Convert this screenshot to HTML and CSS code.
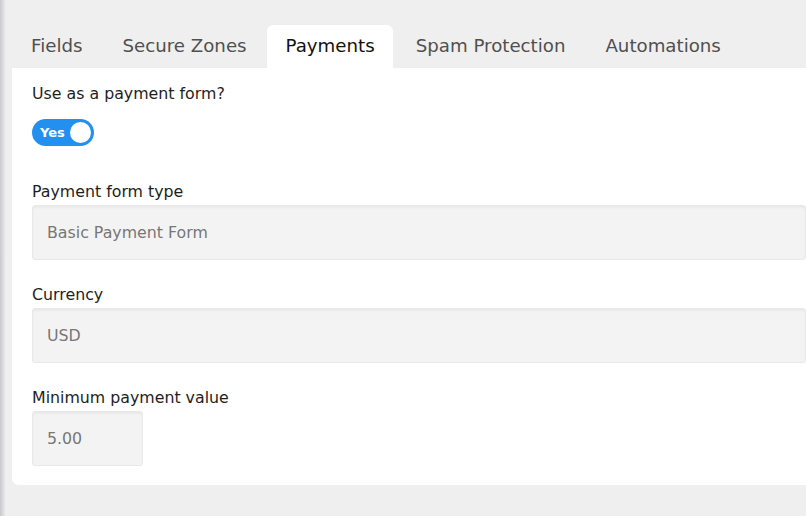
FILE: index.html
```html
<!DOCTYPE html>
<html>
<head>
<meta charset="utf-8">
<link rel="stylesheet" href="styles.css">
</head>
<body>
<div class="page">
  <nav class="tabs">
    <div class="tab">Fields</div>
    <div class="tab">Secure Zones</div>
    <div class="tab active">Payments</div>
    <div class="tab">Spam Protection</div>
    <div class="tab">Automations</div>
  </nav>
  <section class="card">
    <div class="field">
      <div class="label">Use as a payment form?</div>
      <div class="toggle"><span class="toggle-text">Yes</span><span class="knob"></span></div>
    </div>
    <div class="field">
      <div class="label">Payment form type</div>
      <div class="input wide">Basic Payment Form</div>
    </div>
    <div class="field">
      <div class="label">Currency</div>
      <div class="input wide">USD</div>
    </div>
    <div class="field">
      <div class="label">Minimum payment value</div>
      <div class="input small">5.00</div>
    </div>
  </section>
</div>
</body>
</html>
```
FILE: styles.css
```css
* { box-sizing: border-box; }
html, body { margin: 0; padding: 0; }
body {
  width: 806px;
  height: 516px;
  overflow: hidden;
  background: #efefef;
  font-family: "DejaVu Sans", "Liberation Sans", sans-serif;
  position: relative;
}
body::before {
  content: "";
  position: absolute;
  left: 0; top: 0; bottom: 0;
  width: 6px;
  background: linear-gradient(to right, #c9c9ce, #efefef);
}
.page {
  padding: 25px 0 0 12px;
}
.tabs {
  display: flex;
  height: 43px;
  align-items: stretch;
}
.tab {
  font-size: 18.2px;
  color: #505050;
  padding: 10px 20px 0;
  border-radius: 6px 6px 0 0;
}
.tab:first-child { padding-left: 19px; }
.tab.active {
  background: #fff;
  color: #111;
  padding: 10px 18px 0 19px;
}
.tab.active + .tab { padding-left: 23px; }
.card {
  background: #fff;
  border-radius: 0 0 0 7px;
  margin-right: -20px;
  padding: 16px 20px 19px;
}
.field { margin-bottom: 25px; }
.field:first-child { margin-bottom: 36px; }
.field:last-child { margin-bottom: 0; }
.label {
  font-size: 15.8px;
  color: #1e1e1e;
  line-height: 20px;
  margin-bottom: 3px;
}
.field:first-child .label { margin-bottom: 15px; }
.toggle {
  width: 62px;
  height: 27px;
  border-radius: 14px;
  background: #2390f0;
  display: flex;
  align-items: center;
  justify-content: space-between;
  padding: 0 1px 0 8px;
}
.toggle-text {
  color: #fff;
  font-weight: 700;
  font-size: 13px;
}
.knob {
  width: 25px;
  height: 25px;
  border-radius: 50%;
  background: #fff;
  border: 2px solid #2390f0;
}
.input {
  background: #f3f3f3;
  border: 1px solid #e8e8e8;
  border-radius: 3px;
  box-shadow: inset 0 2px 2px rgba(0,0,0,0.04);
  height: 55px;
  display: flex;
  align-items: center;
  padding-left: 14px;
  font-size: 15.8px;
  color: #777;
}
.input.wide { width: 100%; }
.input.small { width: 111px; }
```
